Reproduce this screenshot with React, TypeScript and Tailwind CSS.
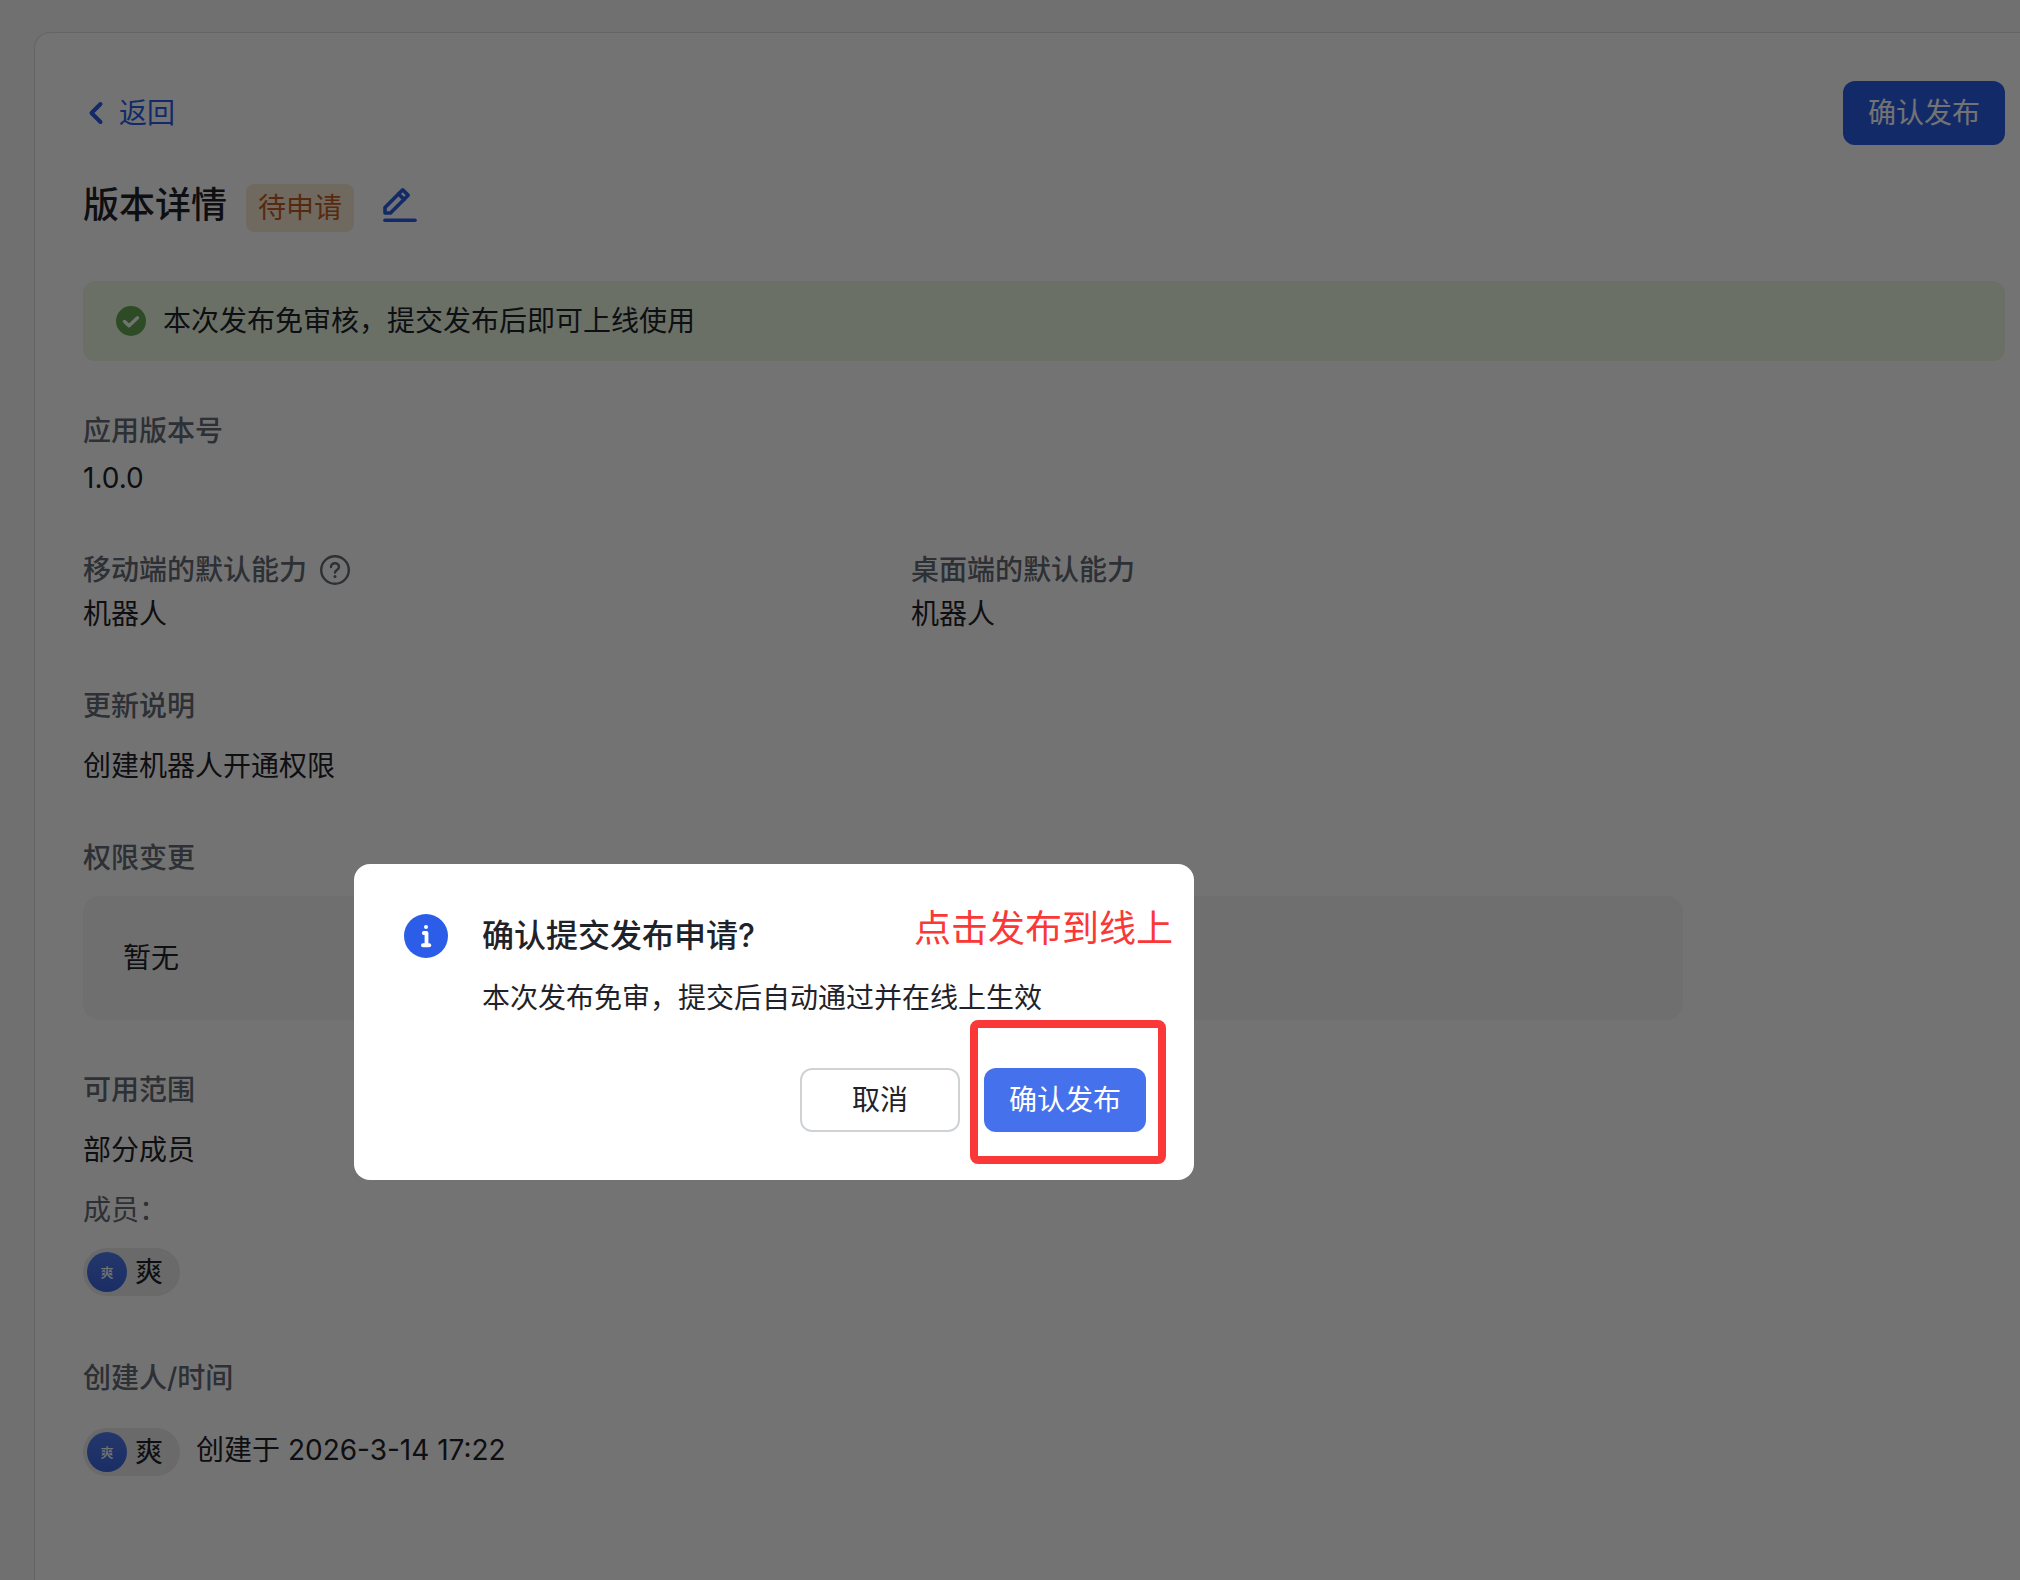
import React, { useState } from "react";

interface FieldProps {
  label: React.ReactNode;
  className?: string;
  children: React.ReactNode;
}

// 字段：标题 + 内容
function Field({ label, className = "", children }: FieldProps) {
  return (
    <section className={className}>
      <h2 className="flex items-center gap-3 font-medium text-[#646a73]">{label}</h2>
      {children}
    </section>
  );
}

// 成员标签
function MemberChip({ name }: { name: string }) {
  return (
    <span className="inline-flex h-12 items-center gap-2 rounded-full bg-[#eaeaea] pl-1 pr-[17px]">
      <span className="flex size-10 items-center justify-center rounded-full bg-gradient-to-b from-[#4e7bf0] to-[#3b66e0] text-[13px] font-medium text-white">
        {name}
      </span>
      {name}
    </span>
  );
}

function EditIcon() {
  return (
    <svg viewBox="0 0 36 36" className="size-9" fill="none" stroke="currentColor" strokeWidth="3.6" strokeLinejoin="round" strokeLinecap="round">
      <path d="M3 26v-5.5L20.700 2.800l5.500 5.500L8.500 26z" />
      <path d="M16.600 6.900l5.500 5.500" />
      <path d="M3 33.200h30" />
    </svg>
  );
}

function HelpIcon() {
  return (
    <svg viewBox="0 0 32 32" className="size-8" fill="none" stroke="currentColor" strokeLinecap="round" strokeLinejoin="round">
      <circle cx="16" cy="16" r="13.8" strokeWidth="2.4" />
      <path d="M12 13c0-2.300 1.800-3.800 4-3.800s4 1.500 4 3.700c0 2.900-4 3.100-4 5.600" strokeWidth="2.400" />
      <circle cx="16" cy="22.400" r="1.500" fill="currentColor" stroke="none" />
    </svg>
  );
}

export default function VersionDetail() {
  const [open, setOpen] = useState(true);

  return (
    <div className="flex min-h-screen flex-col bg-[#f8f8f8] pl-[34px] pt-8 font-['Inter','Noto_Sans_CJK_SC',sans-serif] text-[28px] leading-[44px] text-[#1f2329]">
      <main className="flex-1 rounded-tl-2xl border-l border-t border-[#dedede] bg-white pb-12 pl-12 pr-[15px] pt-12">
        {/* 顶部操作 */}
        <div className="flex h-16 items-center justify-between">
          <a href="#" className="flex items-center gap-3 pl-1 text-[#2b5de8]">
            <svg viewBox="0 0 20 28" className="h-7 w-5" fill="none" stroke="currentColor" strokeWidth="4" strokeLinecap="round" strokeLinejoin="round">
              <path d="M13.500 5l-9 9 9 9" />
            </svg>
            返回
          </a>
          <button
            type="button"
            onClick={() => setOpen(true)}
            className="h-16 rounded-xl bg-[#2b5de8] px-[25px] text-white"
          >
            确认发布
          </button>
        </div>

        {/* 标题 */}
        <div className="mt-[33px] flex items-center">
          <h1 className="text-4xl font-medium">版本详情</h1>
          <span className="ml-[19px] mt-[6px] flex h-12 items-center rounded-lg bg-[#f9e8d6] px-3 text-[#c25e22]">
            待申请
          </span>
          <button type="button" aria-label="编辑" className="ml-7 text-[#2b5de8]">
            <EditIcon />
          </button>
        </div>

        {/* 提示 */}
        <div className="mt-[49px] flex h-20 items-center gap-4 rounded-xl bg-[#ebf9e3] px-8">
          <svg viewBox="0 0 32 32" className="size-8">
            <circle cx="16" cy="16" r="15" fill="#64a653" />
            <path d="M9.500 16.500l4.500 4.300 8.500-8" fill="none" stroke="#fff" strokeWidth="3.400" strokeLinecap="round" strokeLinejoin="round" />
          </svg>
          <p>本次发布免审核，提交发布后即可上线使用</p>
        </div>

        <div className="max-w-[1600px]">
          <Field label="应用版本号" className="mt-12">
            <p className="mt-[3px]">1.0.0</p>
          </Field>

          <div className="mt-12 grid grid-cols-2 gap-14">
            <Field
              label={
                <>
                  移动端的默认能力
                  <HelpIcon />
                </>
              }
            >
              <p>机器人</p>
            </Field>
            <Field label="桌面端的默认能力">
              <p>机器人</p>
            </Field>
          </div>

          <Field label="更新说明" className="mt-12">
            <p className="mt-4">创建机器人开通权限</p>
          </Field>

          <Field label="权限变更" className="mt-12">
            <div className="mt-4 rounded-2xl bg-[#f7f7f7] p-10">暂无</div>
          </Field>

          <Field label="可用范围" className="mt-12">
            <p className="mt-4">部分成员</p>
            <p className="mt-4 text-[#646a73]">成员：</p>
            <div className="mt-4 flex">
              <MemberChip name="爽" />
            </div>
          </Field>

          <Field label="创建人/时间" className="mt-[60px]">
            <div className="mt-7 flex items-start gap-4">
              <MemberChip name="爽" />
              <p>创建于 2026-3-14 17:22</p>
            </div>
          </Field>
        </div>
      </main>

      {/* 确认弹窗 */}
      {open && (
        <div className="fixed inset-0 bg-black/55">
          <div
            role="dialog"
            aria-labelledby="publish-title"
            className="absolute left-[354px] top-[864px] flex w-[840px] gap-8 rounded-2xl bg-white p-12"
          >
            <svg viewBox="0 0 48 48" className="size-12 shrink-0">
              <circle cx="24" cy="24" r="22" fill="#2b5de8" />
              <circle cx="24" cy="15" r="2" fill="#fff" />
              <path d="M21.800 21H24.500V33" fill="none" stroke="#fff" strokeWidth="3.800" strokeLinecap="round" strokeLinejoin="round" />
              <path d="M21 33.200h6.200" stroke="#fff" strokeWidth="4" strokeLinecap="round" />
            </svg>
            <div className="flex-1">
              <h3 id="publish-title" className="text-[32px] font-medium leading-[48px]">
                确认提交发布申请?
              </h3>
              <p className="mt-4">本次发布免审，提交后自动通过并在线上生效</p>
              <div className="mt-12 flex justify-end gap-6">
                <button
                  type="button"
                  onClick={() => setOpen(false)}
                  className="h-16 w-40 rounded-xl border-2 border-[#d0d3d6] bg-white"
                >
                  取消
                </button>
                <button
                  type="button"
                  onClick={() => setOpen(false)}
                  className="h-16 rounded-xl bg-[#4671ed] px-[25px] text-white"
                >
                  确认发布
                </button>
              </div>
            </div>

            {/* 标注 */}
            <span className="absolute right-[21px] top-10 text-[37px] leading-[50px] text-[#fb3838]">点击发布到线上</span>
            <span className="pointer-events-none absolute bottom-4 right-7 h-36 w-[196px] rounded-lg border-8 border-[#fb3838]" />
          </div>
        </div>
      )}
    </div>
  );
}
